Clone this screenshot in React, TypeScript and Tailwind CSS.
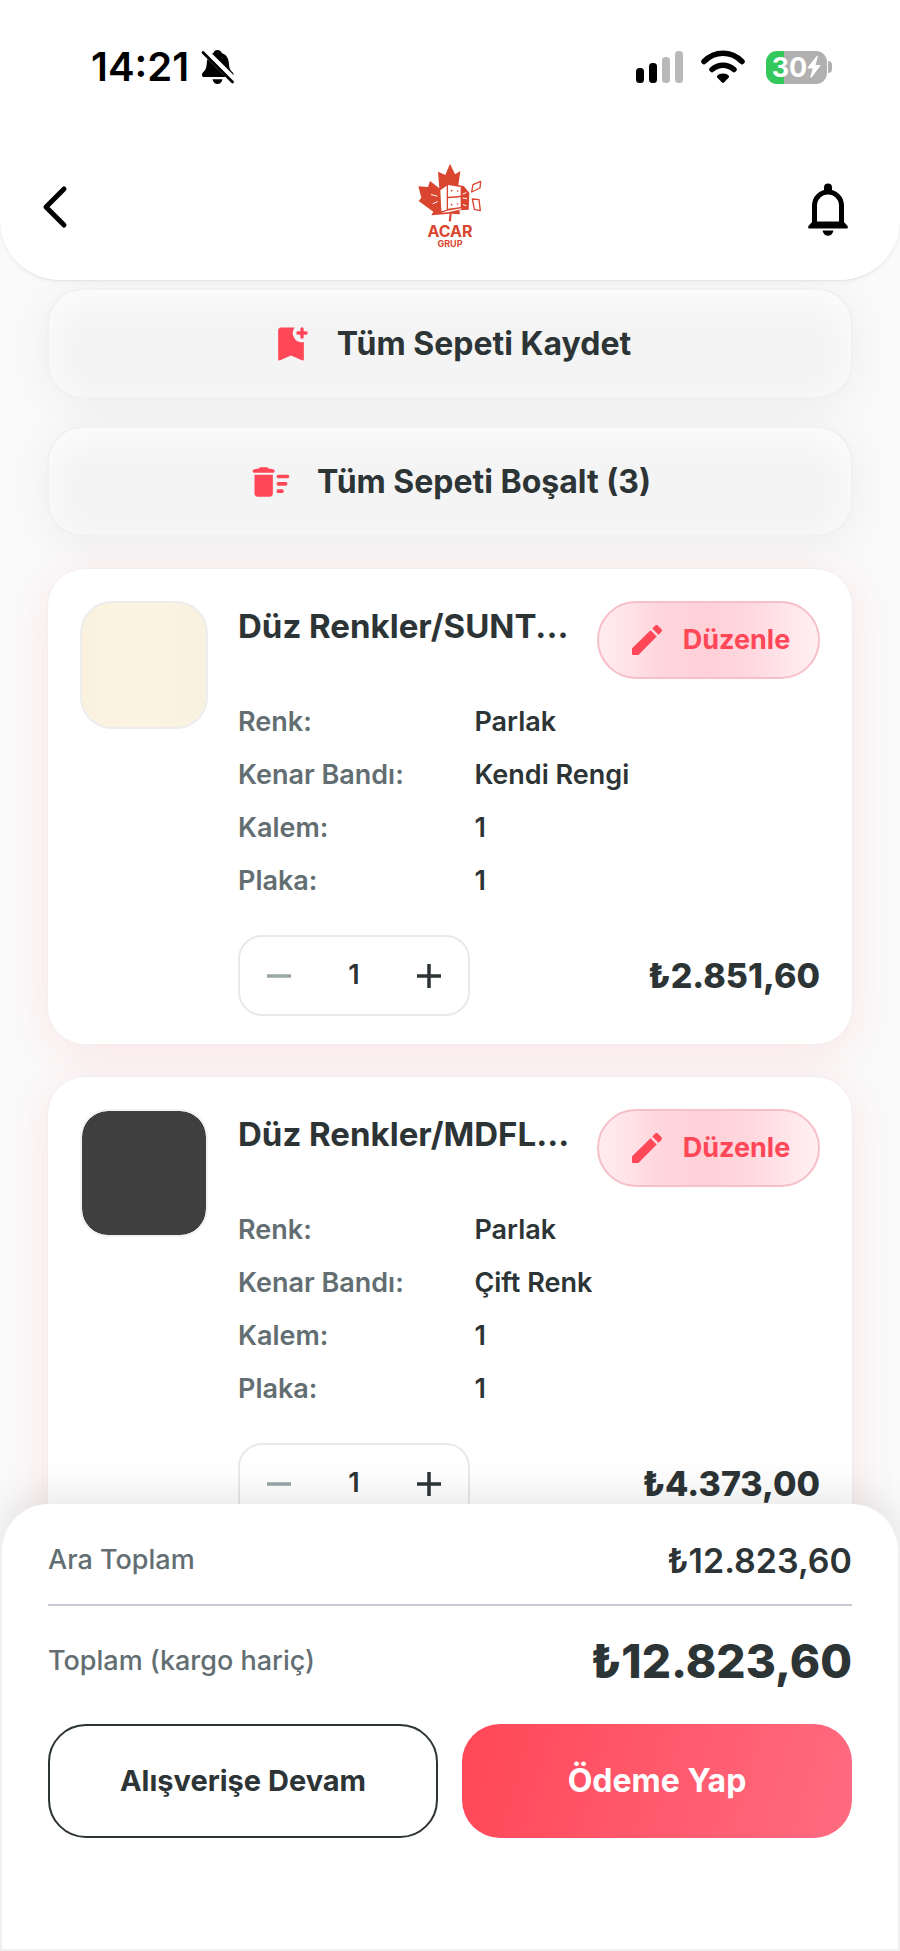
import { useState } from 'react';

const ACCENT = '#ff4757';

interface CartItem {
    id: number;
    title: string;
    swatch: string;
    price: string;
    details: { label: string; value: string }[];
}

const items: CartItem[] = [
    {
        id: 1,
        title: 'Düz Renkler/SUNTALAM',
        swatch: 'bg-linear-to-r from-[#faf1de] via-[#fcf4e2] to-[#f9f1e0] border-2 border-[#ededed] rounded-[32px]',
        price: '₺2.851,60',
        details: [
            { label: 'Renk:', value: 'Parlak' },
            { label: 'Kenar Bandı:', value: 'Kendi Rengi' },
            { label: 'Kalem:', value: '1' },
            { label: 'Plaka:', value: '1' },
        ],
    },
    {
        id: 2,
        title: 'Düz Renkler/MDFLAM',
        swatch: 'bg-[#3f3f3f] bg-clip-padding border-2 border-[#f3f3f3] rounded-[28px]',
        price: '₺4.373,00',
        details: [
            { label: 'Renk:', value: 'Parlak' },
            { label: 'Kenar Bandı:', value: 'Çift Renk' },
            { label: 'Kalem:', value: '1' },
            { label: 'Plaka:', value: '1' },
        ],
    },
];

function StatusBar() {
    return (
        <div className="flex h-[134px] items-center justify-between pl-[91px] pr-[68px]">
            <div className="flex items-center gap-3 text-black">
                <span className="text-[40px] leading-none font-semibold">14:21</span>
                <svg width="34" height="36" viewBox="0 0 34 36" aria-hidden="true">
                    <path
                        d="M16.500 1c2.200 0 3.600 1.100 4.200 2.900 4.600 1.500 6.900 5.300 7.200 10 .3 5.200 1.200 7.200 3.900 9.700 1.100 1.100 1.200 4.400-1.400 4.400H3.200c-2.700 0-2.700-3.200-1.300-4.600 2.600-2.500 3.600-4.600 3.900-9.500.3-4.700 2.400-8.500 6.600-10C13 2.100 14.300 1 16.500 1z"
                        fill="black"
                    />
                    <path d="M11.500 30.300h10c-.6 2.900-2.500 4.700-5 4.700s-4.400-1.800-5-4.700z" fill="black" />
                    <path d="M0-1.500 36 34.500" stroke="white" strokeWidth="7" />
                    <path d="M2 3.500 31.500 33" stroke="black" strokeWidth="2.800" strokeLinecap="round" />
                </svg>
            </div>
            <div className="flex items-center gap-[17px]">
                <svg width="48" height="34" viewBox="0 0 48 34" aria-hidden="true">
                    <rect x="0" y="18" width="8" height="15" rx="3.500" fill="black" />
                    <rect x="13" y="13" width="8" height="20" rx="3.500" fill="black" />
                    <rect x="26" y="7" width="8" height="26" rx="3.500" fill="#b9b9b9" />
                    <rect x="39" y="1" width="8" height="32" rx="3.500" fill="#b9b9b9" />
                </svg>
                <svg width="44" height="34" viewBox="0 0 44 34" fill="none" aria-hidden="true">
                    <path d="M3 11.500C14 .5 30 .5 41 11.500" stroke="black" strokeWidth="5.500" strokeLinecap="round" />
                    <path d="M11 19.500c6.500-5.800 15.500-5.800 22 0" stroke="black" strokeWidth="5.500" strokeLinecap="round" />
                    <path
                        d="M22 23.500c2.600 0 4.500.9 5.600 2 .7.700.6 1.500 0 2.200l-4.400 4.600c-.8.800-1.600.8-2.400 0l-4.400-4.600c-.6-.7-.7-1.500 0-2.200 1.100-1.100 3-2 5.600-2z"
                        fill="black"
                    />
                </svg>
                <div className="flex items-center gap-px pl-1">
                    <div className="flex h-[33px] w-[61px] items-center justify-center rounded-[11px] bg-linear-to-r from-[#34c759] from-30% to-[#b0b0b0] to-30% text-white">
                        <span className="text-[27px] leading-none font-bold">30</span>
                        <svg width="14" height="24" viewBox="0 0 14 24" aria-hidden="true">
                            <path
                                d="M9.500 1.200.8 12.300c-.5.700-.2 1.200.5 1.200h4.400L3.400 21.800c-.3 1 .5 1.300 1.100.6l8.800-11.300c.5-.6.2-1.200-.5-1.200H8.500l2.200-7.900c.2-1-.6-1.500-1.200-.8z"
                                fill="white"
                            />
                        </svg>
                    </div>
                    <div className="h-3 w-1 rounded-r-full bg-[#b0b0b0]" />
                </div>
            </div>
        </div>
    );
}

function Logo() {
    return (
        <div className="flex flex-col items-center pb-1 text-[#d9452f]">
            <svg width="64" height="60" viewBox="52 26 192 180" aria-hidden="true">
                {/* maple leaf */}
                <path
                    d="M148 28 163 60 179 50 173 92 190 96 206 116 204 166 176 168 178 180 153 178 151 201H144L147 178 92 183 98 172 54 140 62 130 53 96 82 98 88 80 116 102 112 52 134 62Z"
                    fill="currentColor"
                />
                {/* cabinet */}
                <path d="M119 108 138 94V166L122 171Z" fill="white" />
                <path d="M142 92 180 98V124L142 127Z" fill="white" />
                <path d="M142 132 180 129V158L142 163Z" fill="white" />
                <path d="M122 175 140 169 182 162V165L142 174Z" fill="white" />
                <g fill="currentColor">
                    <circle cx="153" cy="109" r="2.500" />
                    <circle cx="171" cy="110" r="2.500" />
                    <circle cx="153" cy="151" r="2.500" />
                    <circle cx="171" cy="149" r="2.500" />
                </g>
                <g stroke="white" strokeWidth="3" strokeLinecap="round">
                    <path d="M92 121 109 125" />
                    <path d="M97 148 110 142" />
                    <path d="M187 119 196 115" />
                    <path d="M187 131 198 133" />
                    <path d="M188 151 196 154" />
                </g>
                {/* flying panels */}
                <g fill="none" stroke="currentColor" strokeWidth="4" strokeLinejoin="round">
                    <path d="M217 91 240 81 238 101 213 113Z" />
                    <path d="M215 134 235 136 239 169 221 165Z" />
                </g>
            </svg>
            <span className="text-[16px] leading-[16px] font-bold">ACAR</span>
            <span className="text-[9px] leading-[9px] font-bold">GRUP</span>
        </div>
    );
}

function Header() {
    return (
        <header className="relative z-10 rounded-b-[60px] border-b border-[#e6e6e6] bg-white shadow-[0_1px_4px_rgba(0,0,0,0.05)]">
            <StatusBar />
            <div className="grid h-[146px] grid-cols-[1fr_auto_1fr] items-center px-9">
                <button type="button" aria-label="Geri" className="justify-self-start p-1">
                    <svg width="32" height="44" viewBox="0 0 32 44" fill="none">
                        <path d="M24 4 6 22 24 40" stroke="black" strokeWidth="5" strokeLinecap="round" strokeLinejoin="round" />
                    </svg>
                </button>
                <Logo />
                <button type="button" aria-label="Bildirimler" className="justify-self-end px-4">
                    <svg width="40" height="60" viewBox="0 -6 40 60" fill="none">
                        <path d="M6.500 42V22.500a13.500 13.500 0 0 1 27 0V42" stroke="black" strokeWidth="5" />
                        <path d="M16 9V4.500a4 4 0 0 1 8 0V9z" fill="black" />
                        <path d="M4.500 38.500h31l4 4.500c1 1.500.2 2.500-1.500 2.500H2C.3 45.500-.5 44.500.5 43z" fill="black" />
                        <path d="M14.500 47.500h11c-.7 3.300-3 5.300-5.500 5.300s-4.800-2-5.500-5.300z" fill="black" />
                    </svg>
                </button>
            </div>
        </header>
    );
}

function ActionButton({ icon, children }: { icon: React.ReactNode; children: React.ReactNode }) {
    return (
        <button
            type="button"
            className="flex h-[111px] w-full items-center justify-center gap-6 rounded-[36px] border-2 border-[#f1f1f1] bg-[#f4f4f4] text-[32px] font-bold text-[#2d3436] shadow-[0_6px_48px_rgba(0,0,0,0.06),inset_0_10px_36px_rgba(255,255,255,0.8)]"
        >
            {icon}
            {children}
        </button>
    );
}

function BookmarkAddIcon() {
    return (
        <svg width="44" height="44" viewBox="0 0 24 24" fill={ACCENT} aria-hidden="true">
            <path d="M14 3H6.500C5.700 3 5 3.700 5 4.500v15.800c0 .6.500.8 1 .6l6-2.600 6 2.600c.5.200 1 0 1-.6V10.900A5 5 0 0 1 14 3z" />
            <path d="M18 3.750v4.500M15.750 6h4.500" stroke={ACCENT} strokeWidth="1.800" strokeLinecap="round" />
        </svg>
    );
}

function DeleteSweepIcon() {
    return (
        <svg width="44" height="44" viewBox="0 0 24 24" fill={ACCENT} aria-hidden="true">
            <path d="M3 8h10v10.300c0 1-.7 1.700-1.700 1.700H4.700C3.700 20 3 19.300 3 18.300z" />
            <path d="M5.300 4.600 6 4h4l.7.600L13 5c.6 0 1 .4 1 1s-.4 1-1 1H3c-.6 0-1-.4-1-1s.4-1 1-1z" />
            <path d="M16 9h5M16 13h4M16 17h2" stroke={ACCENT} strokeWidth="2" strokeLinecap="round" />
        </svg>
    );
}

function EditButton() {
    return (
        <button
            type="button"
            className="flex h-[78px] w-[223px] shrink-0 items-center justify-center gap-4 rounded-full border-2 border-[#f6bfca] bg-[linear-gradient(90deg,#ffedf0,#ffd6dd_28%,#ffd0d8_50%,#ffd9e0_70%,#fff0f2)] text-[27px] font-bold text-[#ff4757]"
        >
            <svg width="40" height="40" viewBox="0 0 24 24" fill="currentColor" aria-hidden="true">
                <path d="M3 17.400v3.100c0 .3.200.5.500.5h3.100c.1 0 .3 0 .4-.1L17.800 9.900l-3.700-3.700L3.100 17c-.1.100-.1.200-.1.400zM20.700 7c.4-.4.4-1 0-1.400l-2.300-2.300c-.4-.4-1-.4-1.400 0l-1.800 1.800 3.700 3.700L20.700 7z" />
            </svg>
            Düzenle
        </button>
    );
}

function Stepper() {
    const [count, setCount] = useState(1);

    return (
        <div className="flex h-[81px] w-[232px] items-center justify-between rounded-[24px] border-2 border-[#e9e9e9] px-6">
            <button
                type="button"
                aria-label="Azalt"
                disabled={count === 1}
                onClick={() => setCount(count - 1)}
                className="text-[#2d3436] disabled:text-[#99a5a6]"
            >
                <svg width="30" height="30" viewBox="0 0 30 30" stroke="currentColor" strokeWidth="3.500">
                    <path d="M3 15h24" />
                </svg>
            </button>
            <span className="text-[27px] font-semibold text-[#2d3436]">{count}</span>
            <button type="button" aria-label="Artır" onClick={() => setCount(count + 1)} className="text-[#2d3436]">
                <svg width="30" height="30" viewBox="0 0 30 30" stroke="currentColor" strokeWidth="3.500">
                    <path d="M3 15h24M15 3v24" />
                </svg>
            </button>
        </div>
    );
}

// Fixed part of the product name that fits before the ellipsis
function shorten(title: string) {
    return title.slice(0, 16) + '...';
}

function CartCard({ item }: { item: CartItem }) {
    return (
        <article className="flex shrink-0 gap-[30px] rounded-[38px] border border-[#f3eeee] bg-white px-8 pt-8 pb-7 shadow-[0_8px_44px_rgba(255,71,87,0.12)]">
            <div className={`size-32 shrink-0 ${item.swatch}`} />
            <div className="min-w-0 flex-1">
                <div className="flex items-start justify-between">
                    <h2 className="text-[33px] leading-[50px] font-bold whitespace-nowrap text-[#2d3436]" title={item.title}>
                        {shorten(item.title)}
                    </h2>
                    <EditButton />
                </div>
                <dl className="mt-4">
                    {item.details.map((d) => (
                        <div key={d.label} className="grid grid-cols-[2fr_3fr] gap-1.5 text-[27px] leading-[53px] font-semibold">
                            <dt className="text-[#636e72]">{d.label}</dt>
                            <dd className="text-[#2d3436]">{d.value}</dd>
                        </div>
                    ))}
                </dl>
                <div className="mt-7 flex items-center justify-between">
                    <Stepper />
                    <span className="text-[34px] font-extrabold text-[#2d3436]">{item.price}</span>
                </div>
            </div>
        </article>
    );
}

function Summary() {
    return (
        <footer className="relative z-10 -mt-12 rounded-t-[48px] border-2 border-t-0 border-[#f0f0f0] bg-white px-[46px] pb-[111px] shadow-[0_-8px_40px_rgba(0,0,0,0.10)]">
            <div className="flex h-[100px] items-center justify-between pt-3">
                <span className="text-[27px] font-medium text-[#636e72]">Ara Toplam</span>
                <span className="text-[34px] font-semibold text-[#2d3436]">₺12.823,60</span>
            </div>
            <hr className="border-t-2 border-[#cacad6]" />
            <div className="flex h-[118px] items-center justify-between pb-2">
                <span className="text-[27px] font-medium text-[#636e72]">Toplam (kargo hariç)</span>
                <span className="text-[46px] font-extrabold text-[#2d3436]">₺12.823,60</span>
            </div>
            <div className="grid grid-cols-2 gap-6">
                <button type="button" className="h-[114px] rounded-[38px] border-2 border-[#2d3436] text-[29px] font-bold text-[#2d3436]">
                    Alışverişe Devam
                </button>
                <button
                    type="button"
                    className="h-[114px] rounded-[38px] bg-[linear-gradient(106deg,#ff4757,#ff6b81)] text-[32px] font-bold text-white"
                >
                    Ödeme Yap
                </button>
            </div>
        </footer>
    );
}

export default function App() {
    return (
        <div className="flex h-screen flex-col bg-[#fafafa] font-['Inter','Noto_Sans',sans-serif]">
            <Header />
            <main className="-mt-[60px] flex min-h-0 flex-1 flex-col gap-[31px] overflow-y-auto px-[47px] pt-[67px] pb-20 [scrollbar-width:none]">
                <div className="flex flex-col gap-[27px]">
                    <ActionButton icon={<BookmarkAddIcon />}>Tüm Sepeti Kaydet</ActionButton>
                    <ActionButton icon={<DeleteSweepIcon />}>Tüm Sepeti Boşalt (3)</ActionButton>
                </div>
                {items.map((item) => (
                    <CartCard key={item.id} item={item} />
                ))}
            </main>
            <Summary />
        </div>
    );
}
